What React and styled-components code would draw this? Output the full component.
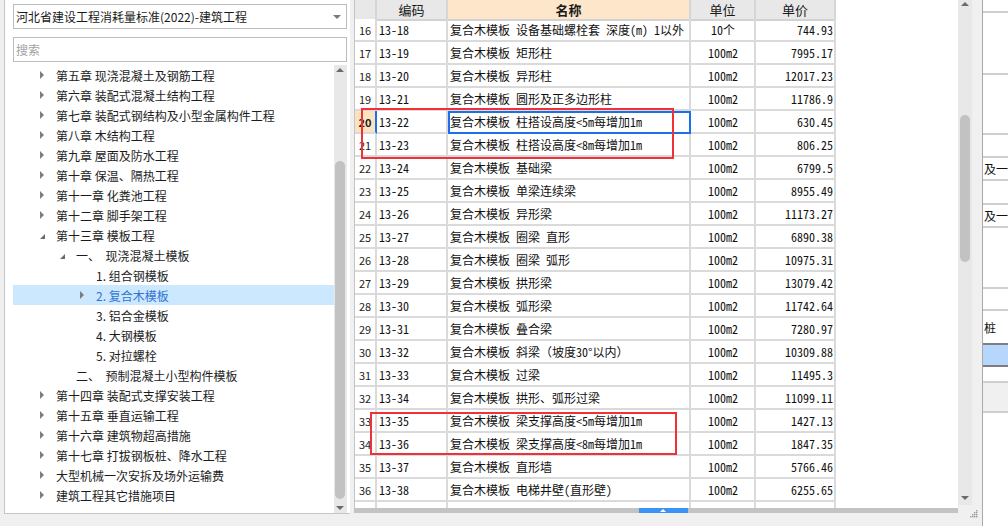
import React from "react";
import styled, { createGlobalStyle } from "styled-components";

const cjk = `"Noto Sans CJK SC", "Noto Sans", sans-serif`;
const song = `"Noto Sans Mono CJK SC", "Noto Sans CJK SC", "Liberation Mono", monospace`;

const GlobalStyle = createGlobalStyle`
  html, body {
    margin: 0;
    padding: 0;
    background: #f0f0f0;
  }
  body {
    font-family: ${cjk};
  }
`;

const tree = [
  { level: 0, arrow: "right", text: "第五章 现浇混凝土及钢筋工程" },
  { level: 0, arrow: "right", text: "第六章 装配式混凝土结构工程" },
  { level: 0, arrow: "right", text: "第七章 装配式钢结构及小型金属构件工程" },
  { level: 0, arrow: "right", text: "第八章 木结构工程" },
  { level: 0, arrow: "right", text: "第九章 屋面及防水工程" },
  { level: 0, arrow: "right", text: "第十章 保温、隔热工程" },
  { level: 0, arrow: "right", text: "第十一章 化粪池工程" },
  { level: 0, arrow: "right", text: "第十二章 脚手架工程" },
  { level: 0, arrow: "down", text: "第十三章 模板工程" },
  { level: 1, arrow: "down", text: "一、  现浇混凝土模板" },
  { level: 2, text: "1. 组合钢模板" },
  { level: 2, arrow: "right", text: "2. 复合木模板", selected: true },
  { level: 2, text: "3. 铝合金模板" },
  { level: 2, text: "4. 大钢模板" },
  { level: 2, text: "5. 对拉螺栓" },
  { level: 1, text: "二、  预制混凝土小型构件模板" },
  { level: 0, arrow: "right", text: "第十四章 装配式支撑安装工程" },
  { level: 0, arrow: "right", text: "第十五章 垂直运输工程" },
  { level: 0, arrow: "right", text: "第十六章 建筑物超高措施" },
  { level: 0, arrow: "right", text: "第十七章 打拔钢板桩、降水工程" },
  { level: 0, arrow: "right", text: "大型机械一次安拆及场外运输费" },
  { level: 0, arrow: "right", text: "建筑工程其它措施项目" },
];

const P = "复合木模板 ";
const rows = [
  [16, "13-18", P + "设备基础螺栓套 深度(m) 1以外", "10个", "744.93"],
  [17, "13-19", P + "矩形柱", "100m2", "7995.17"],
  [18, "13-20", P + "异形柱", "100m2", "12017.23"],
  [19, "13-21", P + "圆形及正多边形柱", "100m2", "11786.9"],
  [20, "13-22", P + "柱搭设高度<5m每增加1m", "100m2", "630.45"],
  [21, "13-23", P + "柱搭设高度<8m每增加1m", "100m2", "806.25"],
  [22, "13-24", P + "基础梁", "100m2", "6799.5"],
  [23, "13-25", P + "单梁连续梁", "100m2", "8955.49"],
  [24, "13-26", P + "异形梁", "100m2", "11173.27"],
  [25, "13-27", P + "圈梁 直形", "100m2", "6890.38"],
  [26, "13-28", P + "圈梁 弧形", "100m2", "10975.31"],
  [27, "13-29", P + "拱形梁", "100m2", "13079.42"],
  [28, "13-30", P + "弧形梁", "100m2", "11742.64"],
  [29, "13-31", P + "叠合梁", "100m2", "7280.97"],
  [30, "13-32", P + "斜梁（坡度30°以内）", "100m2", "10309.88"],
  [31, "13-33", P + "过梁", "100m2", "11495.3"],
  [32, "13-34", P + "拱形、弧形过梁", "100m2", "11099.11"],
  [33, "13-35", P + "梁支撑高度<5m每增加1m", "100m2", "1427.13"],
  [34, "13-36", P + "梁支撑高度<8m每增加1m", "100m2", "1847.35"],
  [35, "13-37", P + "直形墙", "100m2", "5766.46"],
  [36, "13-38", P + "电梯井壁(直形壁)", "100m2", "6255.65"],
  ["", "", "", "", ""],
];

const sideBands = [
  { h: 13 },
  { h: 62 },
  { h: 60 },
  { h: 23 },
  { h: 23, text: "及一" },
  { h: 24 },
  { h: 23, text: "及一" },
  { h: 61 },
  { h: 22 },
  { h: 34, text: "桩", dark: true },
  { h: 22, bg: "#b6d7fb", dark: true },
  { h: 16 },
  { h: 30, bg: "#f0f0f0" },
];

const Arrow = ({ dir }) => {
  if (dir === "down") return <Expanded />;
  if (dir === "right") return <Collapsed />;
  return null;
};

const App = () => {
  return (
    <>
      <GlobalStyle />
      <Screen>
        <LeftPane>
          <Select>
            <span>河北省建设工程消耗量标准(2022)-建筑工程</span>
            <SmallTri $dir="down" $color="#7a7a7a" />
          </Select>
          <Search>搜索</Search>
          <TreeBox>
            <TreeList>
              {tree.map((node, i) => (
                <TreeRow key={i} $level={node.level} $selected={node.selected}>
                  <Toggle>
                    <Arrow dir={node.arrow} />
                  </Toggle>
                  {node.text}
                </TreeRow>
              ))}
            </TreeList>
            <ScrollTrack $w={13}>
              <SmallTri $dir="up" $color="#6a6a6a" $mt={3} />
              <Thumb $w={10} $mt={89} $h={338} />
              <SmallTri $dir="down" $color="#6a6a6a" $mt="auto" $mb={3} />
            </ScrollTrack>
          </TreeBox>
        </LeftPane>

        <TablePane>
          <TableTop>
            <GridArea>
              <HeadRow>
                <Head />
                <Head>编码</Head>
                <Head $accent>名称</Head>
                <Head>单位</Head>
                <Head>单价</Head>
              </HeadRow>
              {rows.map(([no, code, name, unit, price], i) => {
                const current = no === 20;
                return (
                  <Row key={i}>
                    <NoCell $current={current}>{no}</NoCell>
                    <Cell>{code}</Cell>
                    <Cell $focus={current}>{name}</Cell>
                    <Cell $align="center">{unit}</Cell>
                    <Cell $align="flex-end">{price}</Cell>
                  </Row>
                );
              })}
              <RedBox $x={6} $y={108} $w={313} $h={51} />
              <RedBox $x={15} $y={412} $w={307} $h={43} />
            </GridArea>
            <ScrollTrack $w={14} $h={505}>
              <SmallTri $dir="up" $color="#6a6a6a" $mt={2} />
              <Thumb $w={10} $mt={109} $h={147} />
              <SmallTri $dir="down" $color="#6a6a6a" $mt="auto" $mb={5} />
            </ScrollTrack>
          </TableTop>
          <BottomRow>
            <HScroll>
              <HThumb>
                <SmallTri $dir="up" $color="#ffffff" $size={3} />
              </HThumb>
            </HScroll>
            <Grip width="8" height="8" viewBox="0 0 8 8">
              {[
                [6, 0],
                [4, 2],
                [6, 2],
                [2, 4],
                [4, 4],
                [6, 4],
                [0, 6],
                [2, 6],
                [4, 6],
                [6, 6],
              ].map(([x, y], i) => (
                <rect key={i} x={x} y={y} width="1.4" height="1.4" fill="#9a9a9a" />
              ))}
            </Grip>
          </BottomRow>
        </TablePane>

        <RightPane>
          {sideBands.map((b, i) => (
            <Band key={i} $h={b.h} $bg={b.bg} $dark={b.dark} $prevDark={i === 10}>
              {b.text}
            </Band>
          ))}
        </RightPane>
      </Screen>
    </>
  );
};

const Screen = styled.div`
  display: flex;
  align-items: flex-start;
  width: 1008px;
  height: 526px;
  overflow: hidden;
  background: #f0f0f0;
`;

const LeftPane = styled.div`
  margin-left: 4px;
  width: 347px;
  height: 514px;
  box-sizing: border-box;
  border-left: 1px solid #c6c6c6;
  border-bottom: 1px solid #c6c6c6;
  background: #fff;
  padding: 4px 3px 0 8px;
  display: flex;
  flex-direction: column;
`;

const Select = styled.div`
  height: 25px;
  box-sizing: border-box;
  border: 1px solid #bcbcbc;
  background: #fff;
  display: flex;
  align-items: center;
  justify-content: space-between;
  padding: 0 5px 0 2px;
  font-size: 12px;
  color: #1a1a1a;
`;

const Search = styled.div`
  margin-top: 8px;
  height: 25px;
  box-sizing: border-box;
  border: 1px solid #bcbcbc;
  display: flex;
  align-items: center;
  padding-left: 2px;
  font-size: 12px;
  color: #a3a3a3;
`;

const TreeBox = styled.div`
  margin-top: 3px;
  flex: 1;
  min-height: 0;
  display: flex;
`;

const TreeList = styled.div`
  flex: 1;
  overflow: hidden;
`;

const TreeRow = styled.div`
  height: 20px;
  display: flex;
  align-items: center;
  padding-left: ${(p) => 24 + p.$level * 20}px;
  font-size: 12px;
  white-space: pre;
  color: ${(p) => (p.$selected ? "#2f74d2" : "#1c1c1c")};
  background: ${(p) => (p.$selected ? "#cce8ff" : "transparent")};
`;

const Toggle = styled.span`
  width: 19px;
  flex: none;
  display: flex;
  align-items: center;
  padding-left: 3px;
  box-sizing: border-box;
`;

const Collapsed = styled.span`
  width: 0;
  height: 0;
  border-style: solid;
  border-width: 4px 0 4px 4px;
  border-color: transparent transparent transparent #7d7d7d;
`;

const Expanded = styled.span`
  width: 0;
  height: 0;
  margin-top: 2px;
  border-style: solid;
  border-width: 0 0 5px 5px;
  border-color: transparent transparent #6a6a6a transparent;
`;

const SmallTri = styled.span`
  flex: none;
  width: 0;
  height: 0;
  border-style: solid;
  border-color: transparent;
  border-width: ${(p) => {
    const s = p.$size || 4;
    return p.$dir === "up" ? `0 ${s}px ${s}px ${s}px` : `${s}px ${s}px 0 ${s}px`;
  }};
  ${(p) => (p.$dir === "up" ? "border-bottom-color" : "border-top-color")}: ${(p) => p.$color};
  margin-top: ${(p) => (p.$mt === "auto" ? "auto" : `${p.$mt || 0}px`)};
  margin-bottom: ${(p) => p.$mb || 0}px;
`;

const ScrollTrack = styled.div`
  width: ${(p) => p.$w}px;
  height: ${(p) => (p.$h ? `${p.$h}px` : "auto")};
  flex: none;
  background: #e8e8e8;
  display: flex;
  flex-direction: column;
  align-items: center;
`;

const Thumb = styled.div`
  width: ${(p) => p.$w}px;
  height: ${(p) => p.$h}px;
  margin-top: ${(p) => p.$mt}px;
  border-radius: 5px;
  background: #c2c2c2;
`;

const TablePane = styled.div`
  margin-left: 4px;
  width: 628px;
  flex: none;
  height: 526px;
  display: flex;
  flex-direction: column;
`;

const TableTop = styled.div`
  display: flex;
  height: 508px;
`;

const GridArea = styled.div`
  position: relative;
  width: 603px;
  flex: none;
  border-left: 1px solid #c4c4c4;
  background: #fff;
  overflow: hidden;
`;

const cols = "22px 71px 243px 65px 80px";

const HeadRow = styled.div`
  display: grid;
  grid-template-columns: ${cols};
  height: 19px;
`;

const Head = styled.div`
  box-sizing: border-box;
  border-right: 2px solid #d6d6d6;
  border-bottom: 2px solid #d2d2d2;
  background: ${(p) => (p.$accent ? "#fde6c9" : "#e8e8e8")};
  display: flex;
  align-items: center;
  justify-content: center;
  font-size: 13px;
  font-weight: ${(p) => (p.$accent ? 700 : 400)};
  color: #1a1a1a;
`;

const Row = styled.div`
  display: grid;
  grid-template-columns: ${cols};
  height: 23px;
`;

const Cell = styled.div`
  box-sizing: border-box;
  border-right: 2px solid #dadada;
  border-bottom: 2px solid #dadada;
  display: flex;
  align-items: center;
  justify-content: ${(p) => p.$align || "flex-start"};
  padding: 0 1px 0 2px;
  font-family: ${song};
  font-size: 12px;
  color: #111;
  white-space: pre;
  overflow: hidden;
  outline: ${(p) => (p.$focus ? "2px solid #1b6fe8" : "none")};
  outline-offset: -2px;
`;

const NoCell = styled.div`
  box-sizing: border-box;
  border-right: 2px solid ${(p) => (p.$current ? "#1b6fe8" : "#dadada")};
  border-bottom: 2px solid #dadada;
  background: ${(p) => (p.$current ? "#fde2bf" : "#fff")};
  display: flex;
  align-items: center;
  justify-content: center;
  font-size: 11px;
  font-weight: ${(p) => (p.$current ? 700 : 400)};
  color: #222;
`;

const RedBox = styled.div`
  position: absolute;
  left: ${(p) => p.$x}px;
  top: ${(p) => p.$y}px;
  width: ${(p) => p.$w}px;
  height: ${(p) => p.$h}px;
  box-sizing: border-box;
  border: 2px solid #ee3238;
  pointer-events: none;
`;

const BottomRow = styled.div`
  display: flex;
  align-items: flex-start;
`;

const HScroll = styled.div`
  width: 603px;
  height: 5px;
  flex: none;
  border-left: 1px solid #c4c4c4;
  background: #c3c3c3;
  display: flex;
`;

const HThumb = styled.div`
  margin-left: 284px;
  width: 49px;
  height: 5px;
  background: #3b93f3;
  display: flex;
  align-items: center;
  justify-content: center;
`;

const Grip = styled.svg`
  margin: 2px 0 0 12px;
  flex: none;
`;

const RightPane = styled.div`
  flex: 1;
  height: 526px;
  box-sizing: border-box;
  border-left: 1px solid #a9a9a9;
  background: #fff;
  display: flex;
  flex-direction: column;
`;

const Band = styled.div`
  flex: none;
  height: ${(p) => p.$h}px;
  box-sizing: border-box;
  border-bottom: 2px solid ${(p) => (p.$dark ? "#7d7d7d" : "#cfcfcf")};
  background: ${(p) => p.$bg || "#fff"};
  display: flex;
  align-items: center;
  padding-left: 1px;
  font-family: ${song};
  font-size: 12px;
  color: #111;
  white-space: nowrap;
  overflow: hidden;
`;

export default App;
